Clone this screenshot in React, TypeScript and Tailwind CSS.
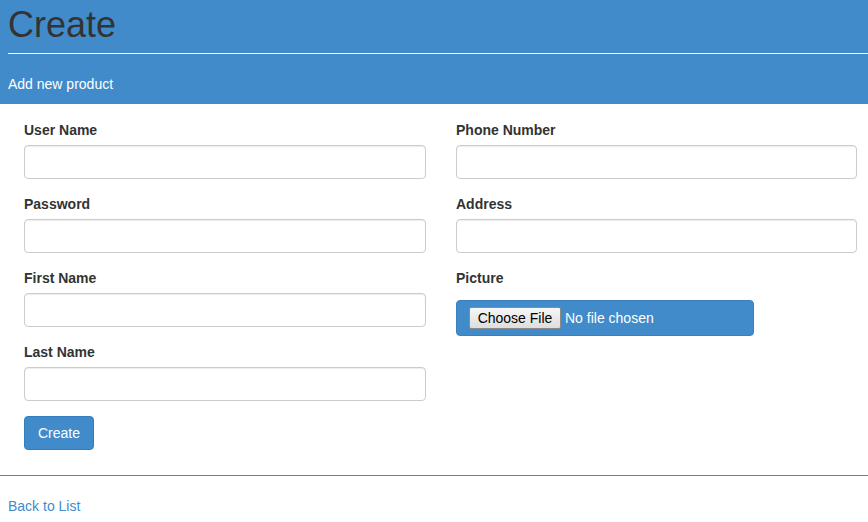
const fields = {
  left: ['User Name', 'Password', 'First Name', 'Last Name'],
  right: ['Phone Number', 'Address'],
};

function Field({ label }: { label: string }) {
  return (
    <div className="flex flex-col">
      <label className="text-[14px] font-bold leading-[20px] text-[#333]">{label}</label>
      <input type="text" className="mt-[5px] h-[34px] w-full rounded-[4px] border border-[#ccc] bg-white px-3 shadow-[inset_0_1px_1px_rgba(0,0,0,0.075)] outline-none" />
    </div>
  );
}

export default function App() {
  return (
    <div className="min-h-[522px] w-[868px] bg-white text-[14px] text-[#333]" style={{ fontFamily: '"Liberation Sans", Arial, sans-serif' }}>
      <header className="bg-[#428bca] pl-2">
        <div className="h-[54px] border-b border-white">
          <h1 className="pt-[5px] text-[36px] font-normal leading-[40px] text-[#333]">Create</h1>
        </div>
        <p className="pb-[10px] pt-[20px] text-[14px] leading-[20px] text-white">Add new product</p>
      </header>

      <form className="flex gap-[30px] pl-[24px] pr-[11px] pt-[16px]" onSubmit={(e) => e.preventDefault()}>
        <div className="flex w-[402px] flex-col gap-[15px]">
          {fields.left.map((label) => <Field key={label} label={label} />)}
          <div>
            <button type="submit" className="h-[34px] rounded-[4px] border border-[#357ebd] bg-[#428bca] px-[13px] text-[14px] leading-[20px] text-white">Create</button>
          </div>
        </div>
        <div className="flex w-[401px] flex-col gap-[15px]">
          {fields.right.map((label) => <Field key={label} label={label} />)}
          <div className="flex flex-col">
            <label className="text-[14px] font-bold leading-[20px] text-[#333]">Picture</label>
            <div className="mt-[12px] flex h-[36px] w-[298px] items-center rounded-[4px] border border-[#3b7fbc] bg-[#428bca] pl-[12px]">
              <span className="flex h-[22px] w-[92px] items-center justify-center rounded-[2px] border border-[#8a8a8a] bg-gradient-to-b from-[#f6f6f6] to-[#dedede] text-[14px] text-black">Choose File</span>
              <span className="ml-[4px] text-[14px] text-white">No file chosen</span>
            </div>
          </div>
        </div>
      </form>

      <div className="mt-[25px] h-px bg-[#428bca]" />
      <div className="pl-2 pt-[20px]">
        <a href="#" className="text-[14px] leading-[20px] text-[#428bca]">Back to List</a>
      </div>
    </div>
  );
}
